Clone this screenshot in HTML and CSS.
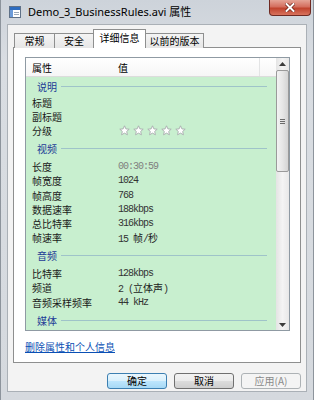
FILE: index.html
```html
<!DOCTYPE html>
<html lang="zh-CN">

<head>
    <meta charset="UTF-8">
    <meta name="viewport" content="width=device-width, initial-scale=1.0">
    <title>Demo_3_BusinessRules.avi 属性</title>
    <link rel="stylesheet" href="styles.css">
</head>

<body>

    <div class="window">
        <div class="titlebar">
            <svg class="app-icon" width="12" height="12" viewBox="0 0 12 12">
                <rect x="0.5" y="0.5" width="11" height="11" fill="#ffffff" stroke="#5f7188" />
                <rect x="1" y="1" width="10" height="3" fill="#2d6cc0" />
                <rect x="1" y="4" width="3" height="7" fill="#6c9bd8" />
                <line x1="5" y1="6.5" x2="10" y2="6.5" stroke="#9aa8b8" />
                <line x1="5" y1="8.5" x2="10" y2="8.5" stroke="#9aa8b8" />
            </svg>
            <span class="title">Demo_3_BusinessRules.avi 属性</span>
            <div class="close">
                <svg width="10" height="9" viewBox="0 0 10 9">
                    <path d="M1.5 1 L8.5 8 M8.5 1 L1.5 8" stroke="#6b1d14" stroke-width="3.4" stroke-linecap="square" />
                    <path d="M1.5 1 L8.5 8 M8.5 1 L1.5 8" stroke="#ffffff" stroke-width="2" stroke-linecap="square" />
                </svg>
            </div>
        </div>

        <div class="client">
            <div class="tabs">
                <div class="tab tab-general">常规</div>
                <div class="tab tab-security">安全</div>
                <div class="tab tab-details active">详细信息</div>
                <div class="tab tab-versions">以前的版本</div>
            </div>

            <div class="panel">
                <div class="list">
                    <div class="list-main">
                        <div class="list-head">
                            <span class="col-name">属性</span>
                            <span class="col-value">值</span>
                        </div>
                        <div class="list-body">
                            <div class="group first"><span>说明</span><i></i></div>
                            <div class="row"><span class="name">标题</span></div>
                            <div class="row"><span class="name">副标题</span></div>
                            <div class="row">
                                <span class="name">分级</span>
                                <span class="stars">
                                    <svg width="11" height="11" viewBox="0 0 11 11"><path class="star" d="M5.5 0.8 L6.9 3.9 L10.2 4.2 L7.7 6.4 L8.4 9.8 L5.5 8.1 L2.6 9.8 L3.3 6.4 L0.8 4.2 L4.1 3.9 Z" /></svg>
                                    <svg width="11" height="11" viewBox="0 0 11 11"><path class="star" d="M5.5 0.8 L6.9 3.9 L10.2 4.2 L7.7 6.4 L8.4 9.8 L5.5 8.1 L2.6 9.8 L3.3 6.4 L0.8 4.2 L4.1 3.9 Z" /></svg>
                                    <svg width="11" height="11" viewBox="0 0 11 11"><path class="star" d="M5.5 0.8 L6.9 3.9 L10.2 4.2 L7.7 6.4 L8.4 9.8 L5.5 8.1 L2.6 9.8 L3.3 6.4 L0.8 4.2 L4.1 3.9 Z" /></svg>
                                    <svg width="11" height="11" viewBox="0 0 11 11"><path class="star" d="M5.5 0.8 L6.9 3.9 L10.2 4.2 L7.7 6.4 L8.4 9.8 L5.5 8.1 L2.6 9.8 L3.3 6.4 L0.8 4.2 L4.1 3.9 Z" /></svg>
                                    <svg width="11" height="11" viewBox="0 0 11 11"><path class="star" d="M5.5 0.8 L6.9 3.9 L10.2 4.2 L7.7 6.4 L8.4 9.8 L5.5 8.1 L2.6 9.8 L3.3 6.4 L0.8 4.2 L4.1 3.9 Z" /></svg>
                                </span>
                            </div>

                            <div class="group"><span>视频</span><i></i></div>
                            <div class="row"><span class="name">长度</span><span class="value muted">00:30:59</span></div>
                            <div class="row"><span class="name">帧宽度</span><span class="value">1024</span></div>
                            <div class="row"><span class="name">帧高度</span><span class="value">768</span></div>
                            <div class="row"><span class="name">数据速率</span><span class="value">188kbps</span></div>
                            <div class="row"><span class="name">总比特率</span><span class="value">316kbps</span></div>
                            <div class="row"><span class="name">帧速率</span><span class="value">15 <b>帧</b>/<b>秒</b></span></div>

                            <div class="group"><span>音频</span><i></i></div>
                            <div class="row"><span class="name">比特率</span><span class="value">128kbps</span></div>
                            <div class="row"><span class="name">频道</span><span class="value">2 (<b>立体声</b>)</span></div>
                            <div class="row"><span class="name">音频采样频率</span><span class="value">44 kHz</span></div>

                            <div class="group"><span>媒体</span><i></i></div>
                        </div>
                    </div>
                    <div class="scrollbar">
                        <div class="arrow up">
                            <svg width="7" height="4" viewBox="0 0 7 4"><path d="M0 4 L3.5 0 L7 4 Z" fill="#3c3c3c" /></svg>
                        </div>
                        <div class="track">
                            <div class="thumb"><span class="grip"></span></div>
                        </div>
                        <div class="arrow down">
                            <svg width="7" height="4" viewBox="0 0 7 4"><path d="M0 0 L7 0 L3.5 4 Z" fill="#3c3c3c" /></svg>
                        </div>
                    </div>
                </div>

                <a class="link" href="javascript:void(0);">删除属性和个人信息</a>
            </div>

            <div class="buttons">
                <button class="btn default">确定</button>
                <button class="btn">取消</button>
                <button class="btn" disabled>应用(A)</button>
            </div>
        </div>
    </div>

</body>

</html>
```

FILE: styles.css
```css
body {
    margin: 0;
    background-color: #ffffff;
    font-family: "Noto Sans CJK SC", sans-serif;
    font-size: 10px;
}

.window {
    width: 314px;
    height: 400px;
    box-sizing: border-box;
    display: flex;
    flex-direction: column;
    background: linear-gradient(to bottom, #cdd3da, #d9dde2 60px, #d5d9de);
    border-left: 1px solid #8d949c;
    border-right: 1px solid #8d949c;
}

/* title bar */

.titlebar {
    height: 24px;
    flex-shrink: 0;
    display: flex;
    align-items: flex-start;
    padding: 0 2px 0 8px;
}

.app-icon {
    margin-top: 6px;
    flex-shrink: 0;
}

.title {
    margin-left: 7px;
    margin-top: 4px;
    font-family: "Noto Sans", "Noto Sans CJK SC", sans-serif;
    font-size: 11px;
    line-height: 16px;
    color: #000000;
}

.close {
    margin-left: auto;
    width: 42px;
    height: 16px;
    box-sizing: border-box;
    display: flex;
    justify-content: center;
    align-items: center;
    border: 1px solid #6f2a22;
    border-top: none;
    border-radius: 0 0 4px 4px;
    background: linear-gradient(to bottom, #e5a497, #d46e5e 45%, #c0432e 55%, #d8735d);
}

/* dialog body */

.client {
    flex: 1;
    margin: 0 6px 8px 6px;
    padding: 5px 5px 0 5px;
    background-color: #f3f3f3;
    border: 1px solid #aab0b6;
    display: flex;
    flex-direction: column;
}

.tabs {
    display: flex;
    align-items: flex-end;
    height: 18px;
    margin-left: 1px;
    margin-bottom: -1px;
    position: relative;
    z-index: 1;
}

.tab {
    height: 15px;
    box-sizing: border-box;
    display: flex;
    justify-content: center;
    align-items: center;
    border: 1px solid #8e8f8f;
    border-bottom: none;
    margin-right: -1px;
    background: linear-gradient(to bottom, #f4f4f4, #e6e6e6);
    color: #000000;
    line-height: 12px;
}

.tab-general {
    width: 41px;
}

.tab-security {
    width: 40px;
}

.tab-details {
    width: 53px;
}

.tab-versions {
    width: 59px;
}

.tab.active {
    height: 19px;
    background: #ffffff;
    padding-bottom: 2px;
}

.panel {
    height: 316px;
    box-sizing: border-box;
    background-color: #ffffff;
    border: 1px solid #8e8f8f;
    padding: 9px 0 0 11px;
}

/* details list */

.list {
    width: 265px;
    height: 274px;
    box-sizing: border-box;
    border: 1px solid #8f9aa3;
    display: flex;
}

.list-main {
    flex: 1;
    display: flex;
    flex-direction: column;
    overflow: hidden;
}

.list-head {
    height: 19px;
    flex-shrink: 0;
    box-sizing: border-box;
    display: flex;
    align-items: center;
    background: linear-gradient(to bottom, #ffffff, #f6f6f6);
    border-bottom: 1px solid #dcdcdc;
    position: relative;
}

.list-head::after {
    content: "";
    position: absolute;
    left: 233px;
    top: 0;
    width: 1px;
    height: 18px;
    background-color: #e3e4e5;
}

.col-name {
    width: 86px;
    padding-left: 6px;
}

.list-body {
    flex: 1;
    background-color: #c8efcf;
    overflow: hidden;
}

.group {
    height: 22px;
    display: flex;
    align-items: center;
    padding: 0 9px 0 11px;
    color: #1e3a96;
}

.group.first {
    height: 18px;
}

.group i {
    flex: 1;
    height: 1px;
    margin-left: 4px;
    background-color: #9fc3c9;
}

.row {
    height: 14.2px;
    display: flex;
    align-items: center;
    color: #1a1a1a;
}

.name {
    width: 86px;
    padding-left: 6px;
    flex-shrink: 0;
}

.value {
    font-family: "Liberation Mono", monospace;
    font-size: 10px;
    letter-spacing: -1px;
    color: #333333;
}

.value b {
    font-family: "Noto Sans CJK SC", sans-serif;
    font-weight: normal;
    letter-spacing: 0;
    color: #1a1a1a;
}

.value.muted {
    color: #808080;
}

.stars {
    display: flex;
    gap: 3px;
    margin-left: 1px;
}

.star {
    fill: #ffffff;
    stroke: #a8acae;
    stroke-width: 0.9;
    stroke-linejoin: round;
}

/* scrollbar */

.scrollbar {
    width: 13px;
    flex-shrink: 0;
    display: flex;
    flex-direction: column;
    background: linear-gradient(to right, #e4e4e4, #f4f4f4 50%, #e8e8e8);
}

.arrow {
    height: 11px;
    display: flex;
    justify-content: center;
    align-items: center;
}

.track {
    flex: 1;
}

.thumb {
    height: 102px;
    margin-top: 1px;
    box-sizing: border-box;
    border: 1px solid #9a9a9a;
    border-radius: 2px;
    background: linear-gradient(to right, #f3f3f3, #e6e6e6 50%, #d4d4d4);
    display: flex;
    justify-content: center;
    align-items: center;
}

.grip {
    width: 5px;
    height: 5px;
    background: repeating-linear-gradient(to bottom, #6b6b6b 0, #6b6b6b 1px, transparent 1px, transparent 2px);
}

.link {
    display: block;
    margin-top: 9px;
    line-height: 13px;
    color: #0a4fb4;
    text-decoration: underline;
    width: max-content;
}

/* bottom buttons */

.buttons {
    display: flex;
    justify-content: flex-end;
    gap: 7px;
    margin-top: 10px;
}

.btn {
    width: 60px;
    height: 16px;
    padding: 0;
    font-family: "Noto Sans CJK SC", sans-serif;
    font-size: 10px;
    line-height: 12px;
    color: #000000;
    border: 1px solid #707070;
    border-radius: 3px;
    background: linear-gradient(to bottom, #f2f2f2, #ebebeb 50%, #dddddd 50%, #cfcfcf);
}

.btn.default {
    border-color: #3c7fb1;
    background: linear-gradient(to bottom, #eaf6fd, #d9f0fc 50%, #bee6fd 50%, #a7d9f5);
}

.btn:disabled {
    color: #8a8a8a;
    border-color: #adb2b5;
    background: #f4f4f4;
}
```
